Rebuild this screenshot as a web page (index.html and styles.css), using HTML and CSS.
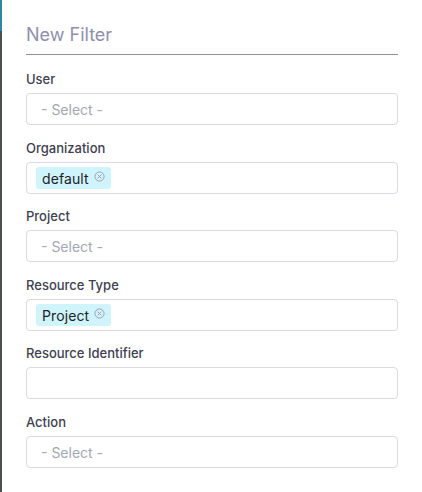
FILE: index.html
```html
<!DOCTYPE html>
<html>
<head>
<meta charset="utf-8">
<link rel="stylesheet" href="styles.css">
</head>
<body>
<div class="app">
  <div class="strip"><div class="strip-top"></div></div>
  <div class="panel">
    <h2 class="title">New Filter</h2>
    <div class="field">
      <div class="label">User</div>
      <div class="box"><span class="placeholder">- Select -</span></div>
    </div>
    <div class="field">
      <div class="label">Organization</div>
      <div class="box has-chip"><span class="chip">default<svg class="x" viewBox="0 0 12 12" width="11" height="11"><circle cx="6" cy="6" r="5" fill="none" stroke="#9a9aa6" stroke-width="1"/><path d="M4.2 4.2L7.8 7.8M7.8 4.2L4.2 7.8" stroke="#9a9aa6" stroke-width="1" stroke-linecap="round"/></svg></span></div>
    </div>
    <div class="field">
      <div class="label">Project</div>
      <div class="box"><span class="placeholder">- Select -</span></div>
    </div>
    <div class="field">
      <div class="label">Resource Type</div>
      <div class="box has-chip"><span class="chip">Project<svg class="x" viewBox="0 0 12 12" width="11" height="11"><circle cx="6" cy="6" r="5" fill="none" stroke="#9a9aa6" stroke-width="1"/><path d="M4.2 4.2L7.8 7.8M7.8 4.2L4.2 7.8" stroke="#9a9aa6" stroke-width="1" stroke-linecap="round"/></svg></span></div>
    </div>
    <div class="field">
      <div class="label">Resource Identifier</div>
      <div class="box"></div>
    </div>
    <div class="field">
      <div class="label">Action</div>
      <div class="box"><span class="placeholder">- Select -</span></div>
    </div>
  </div>
</div>
</body>
</html>
```
FILE: styles.css
```css
html, body {
  margin: 0;
  padding: 0;
  background: #ffffff;
  font-family: Inter, "Liberation Sans", sans-serif;
}
.app {
  display: flex;
  height: 492px;
  overflow: hidden;
}
.strip {
  width: 2px;
  flex: none;
  background: #4b4f55;
}
.strip-top {
  height: 31px;
  background: #2a88a6;
}
.panel {
  width: 372px;
  padding: 23px 0 0 24px;
}
.title {
  margin: 0;
  font-size: 18px;
  line-height: 24px;
  font-weight: 400;
  color: #908fab;
  padding-bottom: 7px;
  border-bottom: 1px solid #928fab;
  margin-bottom: 15px;
}
.field {
  margin-bottom: 13.5px;
}
.label {
  font-size: 13px;
  line-height: 17px;
  font-weight: 500;
  color: #3e4051;
  padding-top: 1px;
  margin-bottom: 5px;
}
.box {
  box-sizing: border-box;
  height: 32px;
  border: 1px solid #dcd9e6;
  border-radius: 4px;
  display: flex;
  align-items: center;
  padding: 0 14px;
}
.box.has-chip {
  padding: 0 9px;
}
.placeholder {
  font-size: 14px;
  color: #a3a7b2;
  padding-top: 1px;
}
.chip {
  display: flex;
  align-items: center;
  gap: 5px;
  height: 22px;
  padding: 1px 6px 0 6px;
  box-sizing: border-box;
  background: #cff4fc;
  border-radius: 3px;
  font-size: 14px;
  letter-spacing: 0.1px;
  color: #1d1f26;
}
.x {
  display: block;
  margin-top: -3px;
}
```
